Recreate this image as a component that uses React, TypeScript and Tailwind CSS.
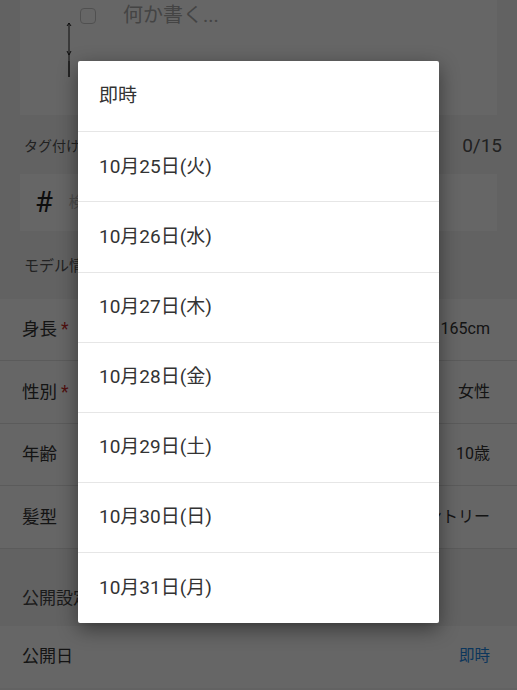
const dates = [
  "即時",
  "10月25日(火)",
  "10月26日(水)",
  "10月27日(木)",
  "10月28日(金)",
  "10月29日(土)",
  "10月30日(日)",
  "10月31日(月)",
]

const rows = [
  { label: "身長", required: true, value: "165cm" },
  { label: "性別", required: true, value: "女性" },
  { label: "年齢", required: false, value: "10歳" },
  { label: "髪型", required: false, value: "カントリー" },
]

const App = () => {
  return (
    <div
      className="relative h-[690px] w-full overflow-hidden bg-[#f4f4f4] text-[#333]"
      style={{ fontFamily: 'Roboto, "Noto Sans CJK JP", sans-serif' }}
    >
      <div className="px-5">
        <div className="relative flex h-[115px] bg-white">
          <svg className="absolute left-[45px] top-[21px]" width="8" height="58" viewBox="0 0 8 58" fill="none" stroke="#222" strokeWidth="1">
            <path d="M4 2 L4 56 M2 5 L4 2 L6 5 M2 30 L4 34 L6 30 M4 40 L4 56" />
          </svg>
          <div className="ml-[60px] mt-[8px] h-[16px] w-[16px] rounded-[4px] border border-[#c8c8c8] bg-white" />
          <div className="ml-[27px] mt-[1px] text-[20px] leading-[28px] text-[#aaa]">何か書く...</div>
        </div>
      </div>

      <div className="flex items-center justify-between px-6 pt-[19px] pb-[16px]">
        <span className="text-[14px] text-[#555]">タグ付け</span>
        <span className="mr-[-9px] text-[19px] leading-[24px] text-[#555]">0/15</span>
      </div>

      <div className="px-5">
        <div className="flex h-[57px] items-center bg-white px-[15px]">
          <span className="text-[29px] leading-none text-[#222]">#</span>
          <span className="ml-[16px] text-[15px] text-[#bbb]">検索</span>
        </div>
      </div>

      <div className="px-6 pt-[24px] pb-[21px] text-[15px] text-[#555]">モデル情報</div>

      <div className="flex flex-col">
        {rows.map((r) => (
          <div key={r.label} className="flex h-[62.5px] items-center justify-between border-b border-[#e4e4e4] bg-white pl-[22px] pr-[27px]">
            <span className="text-[17.5px]">
              {r.label}
              {r.required && <span className="ml-1 text-[#c62828]">*</span>}
            </span>
            <span className="text-[16px]">{r.value}</span>
          </div>
        ))}
      </div>

      <div className="px-[22px] pt-[37px] pb-[15px] text-[17px] text-[#444]">公開設定</div>

      <div className="flex h-[62px] items-center justify-between bg-white pl-[22px] pr-[27px]">
        <span className="text-[17px]">公開日</span>
        <span className="text-[15.5px] text-[#1e88e5]">即時</span>
      </div>

      <div className="absolute inset-0 bg-black/60" />

      <div className="absolute left-[78px] top-[61px] w-[361px] rounded-[2px] bg-white shadow-[0_6px_20px_rgba(0,0,0,0.45)]">
        {dates.map((d, i) => (
          <div
            key={d}
            className={`flex h-[70.2px] items-center pl-[21px] text-[19px] text-[#333] ${i > 0 ? "border-t border-[#e6e6e6]" : ""}`}
          >
            {d}
          </div>
        ))}
      </div>
    </div>
  )
}

export default App
